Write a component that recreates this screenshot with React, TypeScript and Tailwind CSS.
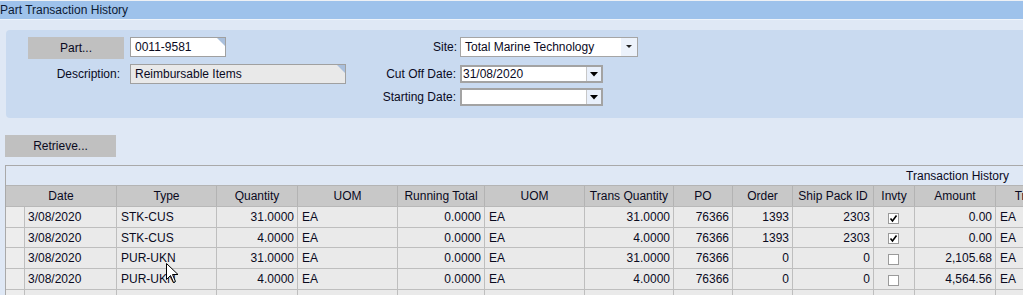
import React from "react";

// ─── Data ─────────────────────────────────────────────────────────────────────

type Row = {
  date: string;
  type: string;
  qty: string;
  uom: string;
  running: string;
  uom2: string;
  transQty: string;
  po: string;
  order: string;
  ship: string;
  invty: boolean;
  amount: string;
  tr: string;
  h: string;
};

const rows: Row[] = [
  { date: "3/08/2020", type: "STK-CUS", qty: "31.0000", uom: "EA", running: "0.0000", uom2: "EA", transQty: "31.0000", po: "76366", order: "1393", ship: "2303", invty: true, amount: "0.00", tr: "EA", h: "h-[21px]" },
  { date: "3/08/2020", type: "STK-CUS", qty: "4.0000", uom: "EA", running: "0.0000", uom2: "EA", transQty: "4.0000", po: "76366", order: "1393", ship: "2303", invty: true, amount: "0.00", tr: "EA", h: "h-[20px]" },
  { date: "3/08/2020", type: "PUR-UKN", qty: "31.0000", uom: "EA", running: "0.0000", uom2: "EA", transQty: "31.0000", po: "76366", order: "0", ship: "0", invty: false, amount: "2,105.68", tr: "EA", h: "h-[21px]" },
  { date: "3/08/2020", type: "PUR-UKN", qty: "4.0000", uom: "EA", running: "0.0000", uom2: "EA", transQty: "4.0000", po: "76366", order: "0", ship: "0", invty: false, amount: "4,564.56", tr: "EA", h: "h-[21px]" },
  { date: "28/07/2020", type: "STK-CUS", qty: "1.0000", uom: "EA", running: "0.0000", uom2: "EA", transQty: "1.0000", po: "0", order: "1400", ship: "2304", invty: false, amount: "0.00", tr: "EA", h: "h-[21px]" },
];

const gridCols =
  "grid grid-cols-[19px_92px_100px_81px_100px_87px_100px_89px_59px_60px_81px_41px_81px_100px]";

// ─── Small pieces ─────────────────────────────────────────────────────────────

const Corner: React.FC = () => (
  <span className="absolute top-0 right-0 w-[8px] h-[8px] bg-[#a9bfdc] [clip-path:polygon(0_0,100%_0,100%_100%)]" />
);

const Caret: React.FC<{ big?: boolean }> = ({ big }) =>
  big ? (
    <svg width="8" height="5" viewBox="0 0 8 5">
      <polygon points="0,0 8,0 4,4.5" fill="#000" />
    </svg>
  ) : (
    <svg width="6" height="4" viewBox="0 0 6 4">
      <polygon points="0,0 6,0 3,3" fill="#222" />
    </svg>
  );

const CheckBox: React.FC<{ checked: boolean }> = ({ checked }) => (
  <svg width="11" height="11" viewBox="0 0 11 11" className="mt-[2px] -ml-[2px]">
    <rect x="0.5" y="0.5" width="10" height="10" fill="#fff" stroke="#9a9a9a" />
    {checked && (
      <path d="M2.5 5.5 L4.5 8 L8.5 2.5" fill="none" stroke="#000" strokeWidth="1.6" />
    )}
  </svg>
);

const DateField: React.FC<{ value: string }> = ({ value }) => (
  <div className="flex w-[143px] h-[18px] border-2 border-[#a3a3a3] bg-white">
    <span className="flex-1 pl-[1px] leading-[14px]">{value}</span>
    <span className="w-[15px] flex items-center justify-center bg-[#e9f0fb] border-l border-[#c8c8c8]">
      <Caret big />
    </span>
  </div>
);

// ─── Component ────────────────────────────────────────────────────────────────

const App: React.FC = () => {
  return (
    <div className="relative w-[1023px] h-[295px] overflow-hidden bg-[#dfe8f5] text-[12px] text-[#0a0a1e] font-['Liberation_Sans',Arial,sans-serif]">
      {/* top strip + title bar */}
      <div className="h-[1px] bg-[#eef1f5]" />
      <div className="h-[18px] bg-[#9ec2eb] leading-[18px] text-[#0c1a34]">
        Part Transaction History
      </div>
      <div className="h-[1px] bg-[#eef3fa]" />

      {/* search panel */}
      <div className="mt-[10px] ml-[6px] -mr-[8px] h-[88px] rounded-[4px] bg-[#c9daf0] flex pt-[7px] pl-[22px]">
        {/* left block */}
        <div className="flex flex-col w-[318px]">
          <div className="flex items-start gap-[6px]">
            <div className="w-[96px] h-[22px] bg-[#c0c0c0] flex items-center justify-center">
              Part...
            </div>
            <div className="relative w-[96px] h-[20px] bg-white border border-[#a0a0a0] pl-[4px] leading-[18px]">
              0011-9581
              <Corner />
            </div>
          </div>
          <div className="flex items-center gap-[6px] mt-[5px]">
            <div className="w-[96px] text-right pr-[4px]">Description:</div>
            <div className="relative w-[216px] h-[20px] bg-[#e9e9e9] border border-[#a0a0a0] pl-[4px] leading-[18px]">
              Reimbursable Items
              <Corner />
            </div>
          </div>
        </div>

        {/* right block */}
        <div className="flex flex-col">
          <div className="flex items-center h-[20px]">
            <span className="w-[111px] text-right">Site:</span>
            <div className="ml-[3px] flex w-[178px] h-[20px] border border-[#a5a5a5] bg-white">
              <span className="flex-1 pl-[4px] leading-[18px]">Total Marine Technology</span>
              <span className="w-[16px] flex items-center justify-center bg-[#ecf2fb]">
                <Caret />
              </span>
            </div>
          </div>
          <div className="flex items-center h-[18px] mt-[8px]">
            <span className="w-[111px] text-right pr-[1px]">Cut Off Date:</span>
            <div className="ml-[3px]">
              <DateField value="31/08/2020" />
            </div>
          </div>
          <div className="flex items-center h-[18px] mt-[5px]">
            <span className="w-[111px] text-right pr-[1px]">Starting Date:</span>
            <div className="ml-[3px]">
              <DateField value="" />
            </div>
          </div>
        </div>
      </div>

      {/* retrieve */}
      <div className="mt-[17px] ml-[5px] w-[111px] h-[22px] bg-[#c0c0c0] flex items-center justify-center">
        Retrieve...
      </div>

      {/* grid */}
      <div className="mt-[8px] ml-[5px] w-[1100px] border-l border-t border-[#a9a9a9]">
        <div className="h-[20px] border-b border-[#b4b4b4] w-[1018px] flex items-center justify-end pr-[15px]">
          Transaction History
        </div>

        <div className={`${gridCols} h-[21px] bg-[#c8c8c8] border-b border-[#b8b8b8]`}>
          {[
            "Date",
            "Type",
            "Quantity",
            "UOM",
            "Running Total",
            "UOM",
            "Trans Quantity",
            "PO",
            "Order",
            "Ship Pack ID",
            "Invty",
            "Amount",
            "Trans UOM",
          ].map((h, i) => (
            <div
              key={i}
              className={`${i === 0 ? "col-span-2" : ""} flex items-center justify-center border-r border-[#b3b3b3] whitespace-nowrap overflow-hidden`}
            >
              {h}
            </div>
          ))}
        </div>

        {rows.map((r, i) => (
          <div key={i} className={`${gridCols} ${r.h} bg-[#eaeaea]`}>
            <div className="border-r border-b border-[#bebebe] bg-[#ededed]" />
            <div className="flex items-center pl-[3px] border-r border-b border-[#bebebe]">{r.date}</div>
            <div className="flex items-center pl-[4px] border-r border-b border-[#bebebe]">{r.type}</div>
            <div className="flex items-center justify-end pr-[3px] border-r border-b border-[#bebebe]">{r.qty}</div>
            <div className="flex items-center pl-[4px] border-r border-b border-[#bebebe]">{r.uom}</div>
            <div className="flex items-center justify-end pr-[3px] border-r border-b border-[#bebebe]">{r.running}</div>
            <div className="flex items-center pl-[4px] border-r border-b border-[#bebebe]">{r.uom2}</div>
            <div className="flex items-center justify-end pr-[3px] border-r border-b border-[#bebebe]">{r.transQty}</div>
            <div className="flex items-center justify-end pr-[3px] border-r border-b border-[#bebebe]">{r.po}</div>
            <div className="flex items-center justify-end pr-[3px] border-r border-b border-[#bebebe]">{r.order}</div>
            <div className="flex items-center justify-end pr-[3px] border-r border-b border-[#bebebe]">{r.ship}</div>
            <div className="flex items-center justify-center border-r border-b border-[#bebebe]">
              <CheckBox checked={r.invty} />
            </div>
            <div className="flex items-center justify-end pr-[3px] border-r border-b border-[#bebebe]">{r.amount}</div>
            <div className="flex items-center pl-[4px] border-r border-b border-[#bebebe]">{r.tr}</div>
          </div>
        ))}
      </div>

      {/* mouse pointer */}
      <svg
        className="absolute left-[166px] top-[263px]"
        width="13"
        height="21"
        viewBox="0 0 13 21"
      >
        <path
          d="M0.5 0.5 L0.5 16.5 L4.5 12.5 L7.5 19.5 L9.5 18.5 L6.5 11.5 L12 11.5 Z"
          fill="#fff"
          stroke="#000"
          strokeWidth="1"
        />
      </svg>
    </div>
  );
};

export default App;
